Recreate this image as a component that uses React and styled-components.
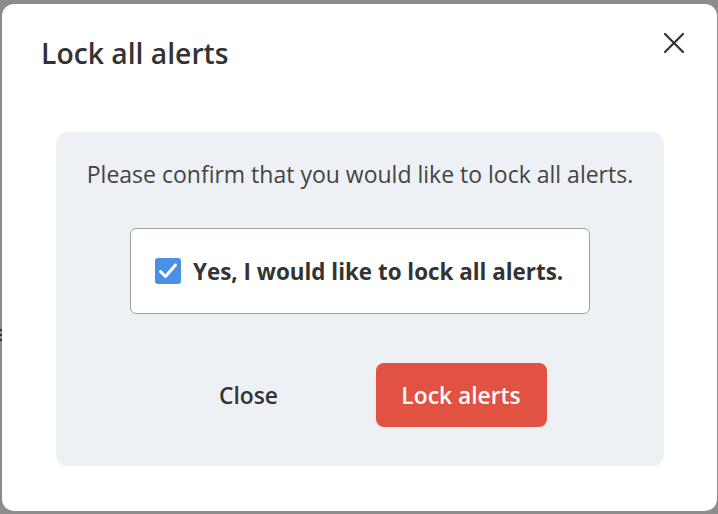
import React from "react";
import styled, { createGlobalStyle } from "styled-components";

const Global = createGlobalStyle`
  html, body { margin: 0; padding: 0; }
  body {
    background: #8c8c8c;
    font-family: "Open Sans", "Lato", sans-serif;
    width: 718px;
    height: 514px;
    overflow: hidden;
  }
`;

const Backdrop = styled.div`
  position: relative;
  width: 718px;
  height: 514px;
  padding: 4px 1px 3px 2px;
  box-sizing: border-box;
  display: flex;
`;

const EdgeMarks = styled.div`
  position: absolute;
  left: 0;
  top: 329px;
  width: 2px;
  display: flex;
  flex-direction: column;
  gap: 3px;
  span { display: block; height: 2px; background: #333; }
`;

const Modal = styled.div`
  flex: 1;
  background: #fff;
  border-radius: 12px;
  display: flex;
  flex-direction: column;
  padding: 0 53px 45px 54px;
  box-sizing: border-box;
`;

const Header = styled.div`
  display: flex;
  align-items: center;
  justify-content: space-between;
  height: 128px;
  margin-left: -15px;
  margin-right: -21px;
  padding-bottom: 30px;
  box-sizing: border-box;
`;

const Title = styled.h1`
  margin: 0;
  font-size: 28.3px;
  font-weight: 600;
  color: #333;
  letter-spacing: 0;
`;

const CloseIcon = styled.button`
  border: 0;
  background: none;
  padding: 0;
  width: 22px;
  height: 22px;
  display: flex;
  cursor: pointer;
  margin-top: -20px;
`;

const Panel = styled.div`
  flex: 1;
  background: #edf1f5;
  border-radius: 12px;
  display: flex;
  flex-direction: column;
  align-items: center;
  padding-top: 27px;
  box-sizing: border-box;
`;

const Prompt = styled.p`
  margin: 0;
  font-size: 23px;
  color: #444;
  line-height: 30px;
`;

const ConfirmCard = styled.label`
  margin-top: 39px;
  width: 460px;
  height: 86px;
  box-sizing: border-box;
  background: #fff;
  border: 1px solid #a3a3a3;
  border-radius: 6px;
  display: flex;
  align-items: center;
  padding-left: 24px;
  gap: 12px;
  cursor: pointer;
`;

const Box = styled.span`
  width: 26px;
  height: 26px;
  border-radius: 3px;
  background: #4a90e6;
  display: flex;
  align-items: center;
  justify-content: center;
  flex-shrink: 0;
`;

const ConfirmText = styled.span`
  font-size: 22.4px;
  font-weight: 700;
  color: #333;
`;

const Actions = styled.div`
  margin-top: 49px;
  margin-left: 2px;
  display: flex;
  gap: 54px;
`;

const Button = styled.button`
  height: 64px;
  width: ${(p) => p.$w}px;
  border: 0;
  border-radius: 8px;
  font-family: inherit;
  font-size: 22.8px;
  font-weight: 600;
  cursor: pointer;
  background: ${(p) => (p.$primary ? "#e15243" : "transparent")};
  color: ${(p) => (p.$primary ? "#fff" : "#333")};
`;

export default function App() {
  return (
    <>
      <Global />
      <Backdrop>
        <EdgeMarks>
          <span />
          <span />
          <span />
        </EdgeMarks>
        <Modal>
          <Header>
            <Title>Lock all alerts</Title>
            <CloseIcon aria-label="Close">
              <svg width="22" height="22" viewBox="0 0 22 22">
                <path d="M2 2 L20 20 M20 2 L2 20" stroke="#333" strokeWidth="2.2" strokeLinecap="round" />
              </svg>
            </CloseIcon>
          </Header>
          <Panel>
            <Prompt>Please confirm that you would like to lock all alerts.</Prompt>
            <ConfirmCard>
              <Box>
                <svg width="26" height="26" viewBox="0 0 26 26">
                  <path d="M5.5 13.5 L10.5 18.5 L20.5 7" fill="none" stroke="#fff" strokeWidth="3" strokeLinecap="round" strokeLinejoin="round" />
                </svg>
              </Box>
              <ConfirmText>Yes, I would like to lock all alerts.</ConfirmText>
            </ConfirmCard>
            <Actions>
              <Button $w={146}>Close</Button>
              <Button $w={171} $primary>Lock alerts</Button>
            </Actions>
          </Panel>
        </Modal>
      </Backdrop>
    </>
  );
}
